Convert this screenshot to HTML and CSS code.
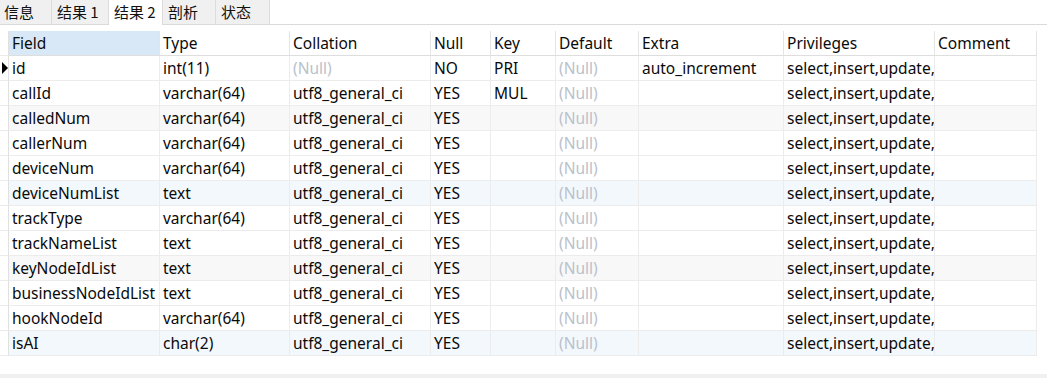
FILE: index.html
```html
<!DOCTYPE html>
<html>
<head>
    <title>结果 2</title>
    <link rel="stylesheet" href="styles.css">
</head>
<body>
    <div class="page">
        <div class="tabs">
            <div class="tab">信息</div>
            <div class="tab">结果 1</div>
            <div class="tab active">结果 2</div>
            <div class="tab">剖析</div>
            <div class="tab">状态</div>
        </div>

        <div class="grid-area">
            <table class="grid">
                <colgroup>
                    <col class="c-gutter">
                    <col class="c-field">
                    <col class="c-type">
                    <col class="c-collation">
                    <col class="c-null">
                    <col class="c-key">
                    <col class="c-default">
                    <col class="c-extra">
                    <col class="c-priv">
                    <col class="c-comment">
                </colgroup>
                <thead>
                    <tr>
                        <th class="gutter"></th>
                        <th class="sorted">Field</th>
                        <th>Type</th>
                        <th>Collation</th>
                        <th>Null</th>
                        <th>Key</th>
                        <th>Default</th>
                        <th>Extra</th>
                        <th>Privileges</th>
                        <th>Comment</th>
                    </tr>
                </thead>
                <tbody>
                    <tr>
                        <td class="gutter"><span class="cursor"></span></td>
                        <td>id</td><td>int(11)</td><td class="null">(Null)</td><td>NO</td><td>PRI</td><td class="null">(Null)</td><td>auto_increment</td><td>select,insert,update,</td><td></td>
                    </tr>
                    <tr>
                        <td class="gutter"></td>
                        <td>callId</td><td>varchar(64)</td><td>utf8_general_ci</td><td>YES</td><td>MUL</td><td class="null">(Null)</td><td></td><td>select,insert,update,</td><td></td>
                    </tr>
                    <tr class="shade">
                        <td class="gutter"></td>
                        <td>calledNum</td><td>varchar(64)</td><td>utf8_general_ci</td><td>YES</td><td></td><td class="null">(Null)</td><td></td><td>select,insert,update,</td><td></td>
                    </tr>
                    <tr>
                        <td class="gutter"></td>
                        <td>callerNum</td><td>varchar(64)</td><td>utf8_general_ci</td><td>YES</td><td></td><td class="null">(Null)</td><td></td><td>select,insert,update,</td><td></td>
                    </tr>
                    <tr>
                        <td class="gutter"></td>
                        <td>deviceNum</td><td>varchar(64)</td><td>utf8_general_ci</td><td>YES</td><td></td><td class="null">(Null)</td><td></td><td>select,insert,update,</td><td></td>
                    </tr>
                    <tr class="tint">
                        <td class="gutter"></td>
                        <td>deviceNumList</td><td>text</td><td>utf8_general_ci</td><td>YES</td><td></td><td class="null">(Null)</td><td></td><td>select,insert,update,</td><td></td>
                    </tr>
                    <tr>
                        <td class="gutter"></td>
                        <td>trackType</td><td>varchar(64)</td><td>utf8_general_ci</td><td>YES</td><td></td><td class="null">(Null)</td><td></td><td>select,insert,update,</td><td></td>
                    </tr>
                    <tr>
                        <td class="gutter"></td>
                        <td>trackNameList</td><td>text</td><td>utf8_general_ci</td><td>YES</td><td></td><td class="null">(Null)</td><td></td><td>select,insert,update,</td><td></td>
                    </tr>
                    <tr class="shade">
                        <td class="gutter"></td>
                        <td>keyNodeIdList</td><td>text</td><td>utf8_general_ci</td><td>YES</td><td></td><td class="null">(Null)</td><td></td><td>select,insert,update,</td><td></td>
                    </tr>
                    <tr>
                        <td class="gutter"></td>
                        <td>businessNodeIdList</td><td>text</td><td>utf8_general_ci</td><td>YES</td><td></td><td class="null">(Null)</td><td></td><td>select,insert,update,</td><td></td>
                    </tr>
                    <tr>
                        <td class="gutter"></td>
                        <td>hookNodeId</td><td>varchar(64)</td><td>utf8_general_ci</td><td>YES</td><td></td><td class="null">(Null)</td><td></td><td>select,insert,update,</td><td></td>
                    </tr>
                    <tr class="tint">
                        <td class="gutter"></td>
                        <td>isAI</td><td>char(2)</td><td>utf8_general_ci</td><td>YES</td><td></td><td class="null">(Null)</td><td></td><td>select,insert,update,</td><td></td>
                    </tr>
                </tbody>
            </table>
        </div>

        <div class="status-strip"></div>
    </div>
</body>
</html>
```

FILE: styles.css
```css
html, body {
    margin: 0;
    height: 100%;
    background-color: #fff;
}
body {
    font-family: "Noto Sans", "Noto Sans CJK SC", sans-serif;
    font-size: 15.5px;
    color: #0a0a0a;
}
.page {
    display: flex;
    flex-direction: column;
    height: 100vh;
}

/* tab strip */
.tabs {
    display: flex;
    height: 24px;
    border-bottom: 1px solid #dadada;
    flex-shrink: 0;
}
.tab {
    box-sizing: border-box;
    height: 24px;
    padding: 0 0 0 5px;
    background-color: #f0f0f0;
    border-right: 1px solid #dcdcdc;
    font-family: "Noto Sans CJK SC", "Noto Sans", sans-serif;
    font-size: 15px;
    line-height: 24px;
    color: #111;
    white-space: nowrap;
}
.tab:nth-child(1) { width: 52px; padding-left: 4px; }
.tab:nth-child(2) { width: 57px; }
.tab:nth-child(3) { width: 54px; }
.tab:nth-child(4) { width: 53px; }
.tab:nth-child(5) { width: 54px; }
.tab.active {
    background-color: #fff;
    height: 25px;
    margin-bottom: -1px;
}

/* grid */
.grid-area {
    flex: 1;
    padding-top: 6px;
}
.grid {
    table-layout: fixed;
    border-collapse: separate;
    border-spacing: 0;
    width: 1037px;
}
.c-gutter { width: 9px; }
.c-field { width: 151px; }
.c-type { width: 130px; }
.c-collation { width: 141px; }
.c-null { width: 60px; }
.c-key { width: 65px; }
.c-default { width: 83px; }
.c-extra { width: 145px; }
.c-priv { width: 151px; }
.c-comment { width: 102px; }

.grid th,
.grid td {
    height: 25px;
    padding: 0 0 0 3px;
    border-right: 1px solid #ececec;
    border-bottom: 1px solid #ececec;
    text-align: left;
    font-weight: normal;
    white-space: nowrap;
    overflow: hidden;
    line-height: 24px;
    box-sizing: border-box;
}
.grid th {
    border-right-color: #e4e4e4;
    border-bottom-color: #dedede;
}
.grid th.sorted {
    background-color: #d9e8f6;
}
.grid .gutter {
    padding: 0;
    border-right-color: #e0e0e0;
    position: relative;
}
.grid th.gutter {
    border-bottom-color: #ececec;
}
.grid tr.shade td {
    background-color: #f8f8f8;
}
.grid tr.tint td {
    background-color: #f3f8fd;
}
.grid tr.shade td.gutter,
.grid tr.tint td.gutter {
    background-color: #fff;
}
.grid td.null {
    color: #b9c1cc;
}
.cursor {
    position: absolute;
    left: 2px;
    top: 6px;
    width: 0;
    height: 0;
    border-top: 6px solid transparent;
    border-bottom: 6px solid transparent;
    border-left: 6px solid #000;
}

.status-strip {
    height: 4px;
    background-color: #f0f0f0;
    flex-shrink: 0;
}
```
